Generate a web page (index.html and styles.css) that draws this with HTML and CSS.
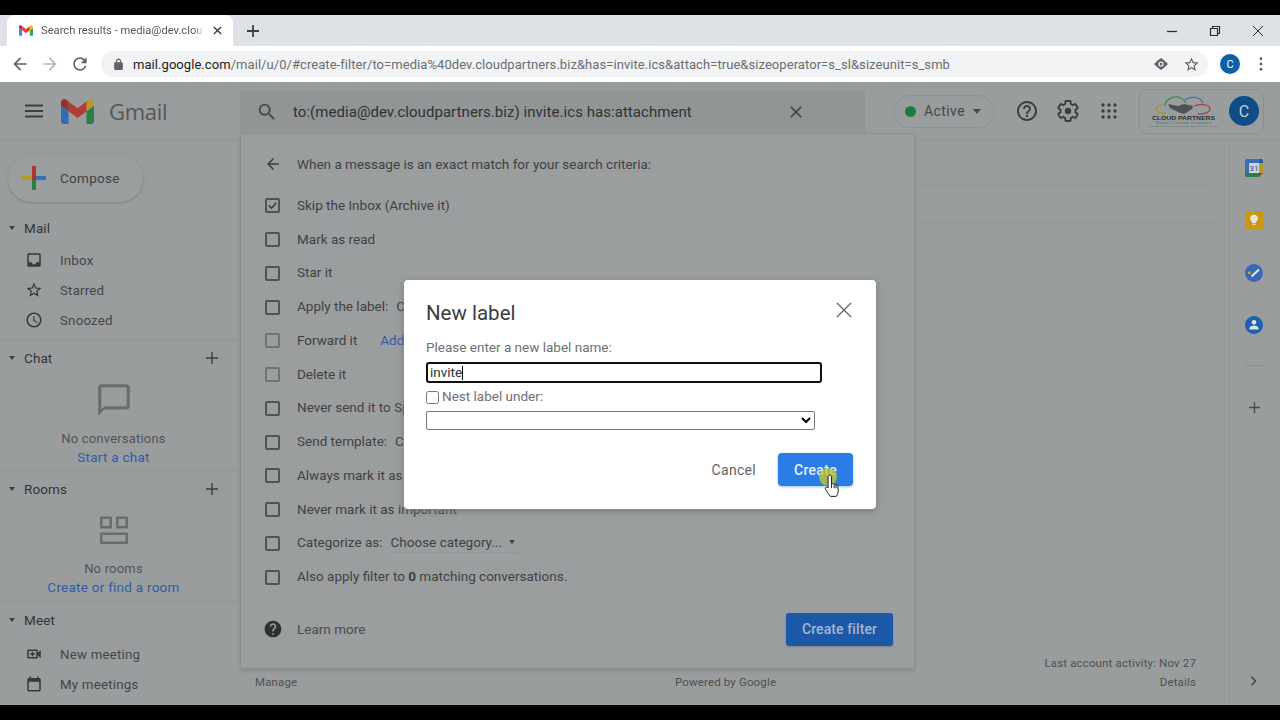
FILE: index.html
```html
<!DOCTYPE html>
<html>
<head>
    <title>Search results - media@dev.cloudpartners.biz</title>
    <link rel="stylesheet" href="styles.css">
</head>
<body>
<div class="blackbar"></div>

<div class="tabstrip">
    <div class="tab">
        <svg class="favicon" viewBox="52 42 88 66">
            <path fill="#4285f4" d="M58 108h14V74L52 59v43c0 3.32 2.69 6 6 6"/>
            <path fill="#34a853" d="M120 108h14c3.32 0 6-2.69 6-6V59l-20 15"/>
            <path fill="#fbbc04" d="M120 48v26l20-15v-8c0-7.42-8.47-11.65-14.4-7.2"/>
            <path fill="#ea4335" d="M72 74V48l24 18 24-18v26L96 92"/>
            <path fill="#c5221f" d="M52 51v8l20 15V48l-5.6-4.2c-5.94-4.45-14.4-.22-14.4 7.2"/>
        </svg>
        <span class="tab-title">Search results - media@dev.clou</span>
        <svg class="tab-close" viewBox="0 0 10 10"><path d="M1 1l8 8M9 1l-8 8"/></svg>
    </div>
    <svg class="tab-new" viewBox="0 0 12 12"><path d="M6 0v12M0 6h12"/></svg>
    <div class="winctl">
        <svg viewBox="0 0 12 12"><path d="M1 6.5h10" stroke-width="1.3"/></svg>
        <svg viewBox="0 0 12 12"><path d="M1.5 3.5h7v7h-7zM3.5 3.5v-2h7v7h-2" stroke-width="1.2"/></svg>
        <svg viewBox="0 0 12 12"><path d="M1 1l10 10M11 1L1 11" stroke-width="1"/></svg>
    </div>
</div>

<div class="toolbar">
    <svg class="nav-ic" viewBox="0 0 24 24"><path fill="#5f6368" d="M20 11H7.83l5.59-5.59L12 4l-8 8 8 8 1.41-1.41L7.83 13H20v-2z"/></svg>
    <svg class="nav-ic" viewBox="0 0 24 24"><path fill="#b4b7bb" d="M4 11h12.17l-5.59-5.59L12 4l8 8-8 8-1.41-1.41L16.17 13H4v-2z"/></svg>
    <svg class="nav-ic" viewBox="0 0 24 24"><path fill="#5f6368" d="M17.65 6.35A7.958 7.958 0 0 0 12 4c-4.42 0-7.99 3.58-7.99 8s3.57 8 7.99 8c3.73 0 6.84-2.55 7.73-6h-2.08A5.99 5.99 0 0 1 12 18c-3.31 0-6-2.69-6-6s2.69-6 6-6c1.66 0 3.14.69 4.22 1.78L13 11h7V4l-2.35 2.35z"/></svg>
    <div class="omnibox">
        <svg class="lock" viewBox="0 0 24 24"><path fill="#5f6368" d="M18 8h-1V6c0-2.76-2.24-5-5-5S7 3.24 7 6v2H6c-1.1 0-2 .9-2 2v10c0 1.1.9 2 2 2h12c1.1 0 2-.9 2-2V10c0-1.1-.9-2-2-2zM9 6c0-1.66 1.34-3 3-3s3 1.34 3 3v2H9V6z"/></svg>
        <span class="url"><b>mail.google.com</b>/mail/u/0/#create-filter/to=media%40dev.cloudpartners.biz&amp;has=invite.ics&amp;attach=true&amp;sizeoperator=s_sl&amp;sizeunit=s_smb</span>
        <svg class="omni-eye" viewBox="0 0 14 12"><path fill="#5f6368" d="M7 0l3 2.2L14 6l-4 3.8L7 12 4 9.8 0 6l4-3.8z"/><circle cx="7" cy="6" r="2.6" fill="#fff"/><circle cx="7" cy="6" r="1.5" fill="#5f6368"/></svg>
        <svg class="omni-star" viewBox="0 0 24 24"><path fill="#5f6368" d="M22 9.24l-7.19-.62L12 2 9.19 8.63 2 9.24l5.46 4.73L5.82 21 12 17.27 18.18 21l-1.63-7.03L22 9.24zM12 15.4l-3.76 2.27 1-4.28-3.32-2.88 4.38-.38L12 6.1l1.71 4.04 4.38.38-3.32 2.88 1 4.28L12 15.4z"/></svg>
    </div>
    <span class="chrome-avatar">C</span>
    <svg class="chrome-dots" viewBox="0 0 4 16"><circle cx="2" cy="2" r="1.6"/><circle cx="2" cy="8" r="1.6"/><circle cx="2" cy="14" r="1.6"/></svg>
</div>

<div class="gmail">
    <header class="gm-header">
        <div class="gm-brand">
            <svg class="burger" viewBox="0 0 18 14"><path d="M0 1.5h18M0 7h18M0 12.5h18"/></svg>
            <svg class="gm-logo" viewBox="52 42 88 66">
                <path fill="#2f6cb8" d="M58 108h14V74L52 59v43c0 3.32 2.69 6 6 6"/>
                <path fill="#2b7f45" d="M120 108h14c3.32 0 6-2.69 6-6V59l-20 15"/>
                <path fill="#b89a22" d="M120 48v26l20-15v-8c0-7.42-8.47-11.65-14.4-7.2"/>
                <path fill="#b03d32" d="M72 74V48l24 18 24-18v26L96 92"/>
                <path fill="#96302a" d="M52 51v8l20 15V48l-5.6-4.2c-5.94-4.45-14.4-.22-14.4 7.2"/>
            </svg>
            <span class="gm-word">Gmail</span>
        </div>
        <div class="search">
            <svg class="search-ic" viewBox="0 0 24 24"><path fill="#46484a" d="M15.5 14h-.79l-.28-.27A6.471 6.471 0 0 0 16 9.5 6.5 6.5 0 1 0 9.5 16c1.61 0 3.09-.59 4.23-1.57l.27.28v.79l5 4.99L20.49 19l-4.99-5zm-6 0C7.01 14 5 11.99 5 9.5S7.01 5 9.5 5 14 7.01 14 9.5 11.99 14 9.5 14z"/></svg>
            <span class="search-text">to:(media@dev.cloudpartners.biz) invite.ics has:attachment</span>
            <svg class="search-x" viewBox="0 0 12 12"><path d="M.7.7l10.6 10.6M11.3.7L.7 11.3"/></svg>
        </div>
        <div class="active-pill">
            <span class="dot"></span>
            <span>Active</span>
            <span class="caret caret-big"></span>
        </div>
        <svg class="hd-ic hd-help" viewBox="0 0 24 24"><path d="M11 18h2v-2h-2v2zm1-16C6.48 2 2 6.48 2 12s4.48 10 10 10 10-4.48 10-10S17.52 2 12 2zm0 18c-4.41 0-8-3.59-8-8s3.59-8 8-8 8 3.59 8 8-3.59 8-8 8zm0-14c-2.21 0-4 1.79-4 4h2c0-1.1.9-2 2-2s2 .9 2 2c0 2-3 1.75-3 5h2c0-2.25 3-2.5 3-5 0-2.21-1.79-4-4-4z"/></svg>
        <svg class="hd-ic hd-gear" viewBox="0 0 24 24"><path class="gear-line" d="M19.43 12.98c.04-.32.07-.64.07-.98s-.03-.66-.07-.98l2.11-1.65c.19-.15.24-.42.12-.64l-2-3.46c-.12-.22-.39-.3-.61-.22l-2.49 1c-.52-.4-1.08-.73-1.69-.98l-.38-2.65C14.46 2.18 14.25 2 14 2h-4c-.25 0-.46.18-.49.42l-.38 2.65c-.61.25-1.17.59-1.69.98l-2.49-1c-.23-.09-.49 0-.61.22l-2 3.46c-.13.22-.07.49.12.64l2.11 1.65c-.04.32-.07.65-.07.98s.03.66.07.98l-2.11 1.65c-.19.15-.24.42-.12.64l2 3.46c.12.22.39.3.61.22l2.49-1c.52.4 1.08.73 1.69.98l.38 2.65c.03.24.24.42.49.42h4c.25 0 .46-.18.49-.42l.38-2.65c.61-.25 1.17-.59 1.69-.98l2.49 1c.23.09.49 0 .61-.22l2-3.46c.12-.22.07-.49-.12-.64l-2.11-1.65z"/><circle cx="12" cy="12" r="3.2"/></svg>
        <svg class="hd-ic hd-grid" viewBox="0 0 16 16"><circle cx="2" cy="2" r="1.7"/><circle cx="8" cy="2" r="1.7"/><circle cx="14" cy="2" r="1.7"/><circle cx="2" cy="8" r="1.7"/><circle cx="8" cy="8" r="1.7"/><circle cx="14" cy="8" r="1.7"/><circle cx="2" cy="14" r="1.7"/><circle cx="8" cy="14" r="1.7"/><circle cx="14" cy="14" r="1.7"/></svg>
        <div class="account">
            <svg class="cp-logo" viewBox="0 0 72 34">
                <path fill="none" stroke="#a8932a" stroke-width="1.3" d="M18 11C10 10 7 14 9 17c1 2 4 2 9 2"/>
                <path fill="none" stroke="#3f8a55" stroke-width="1.3" d="M17 11c1-6 9-10 16-7 2 1 4 3 5 5"/>
                <path fill="none" stroke="#4a6fb0" stroke-width="1.3" d="M37 6c5-4 15-4 18 3"/>
                <path fill="none" stroke="#a8404a" stroke-width="1.3" d="M46 12c8-3 16-1 16 3 0 4-6 5-12 5"/>
                <path fill="#4f5153" d="M20 10l10 2 6-2 9 2-1 3-8 5-6-2-8-4z"/>
                <text class="cp-name" x="4" y="25.500" textLength="63" lengthAdjust="spacingAndGlyphs">CLOUD PARTNERS</text>
                <text class="cp-tag" x="7" y="30" textLength="57" lengthAdjust="spacingAndGlyphs">Your Cloud Partner</text>
                <path fill="none" stroke="#7a8a8a" stroke-width=".8" d="M0 32.500h70"/>
            </svg>
            <span class="gm-avatar">C</span>
        </div>
    </header>

    <div class="gm-main">
        <nav class="sidebar">
            <div class="compose">
                <svg class="compose-plus" viewBox="0 0 24 24">
                    <path fill="#2b7f45" d="M10 14h4v10h-4z"/>
                    <path fill="#3b6fb5" d="M14 10h10v4H14z"/>
                    <path fill="#b89a22" d="M0 10h10v4H0z"/>
                    <path fill="#a8382e" d="M10 0h4v14h-4z"/>
                </svg>
                <span>Compose</span>
            </div>

            <section class="sec sec-mail">
                <div class="sec-head"><span class="caret"></span><span class="sec-title">Mail</span></div>
                <div class="sec-items">
                    <div class="item"><svg viewBox="0 0 24 24"><path d="M19 3H5c-1.1 0-2 .9-2 2v14c0 1.1.9 2 2 2h14c1.1 0 2-.9 2-2V5c0-1.1-.9-2-2-2zm0 12h-4c0 1.66-1.35 3-3 3s-3-1.34-3-3H5V5h14v10z"/></svg><span>Inbox</span></div>
                    <div class="item"><svg viewBox="0 0 24 24"><path d="M22 9.24l-7.19-.62L12 2 9.19 8.63 2 9.24l5.46 4.73L5.82 21 12 17.27 18.18 21l-1.63-7.03L22 9.24zM12 15.4l-3.76 2.27 1-4.28-3.32-2.88 4.38-.38L12 6.1l1.71 4.04 4.38.38-3.32 2.88 1 4.28L12 15.4z"/></svg><span>Starred</span></div>
                    <div class="item"><svg viewBox="0 0 24 24"><path d="M11.99 2C6.47 2 2 6.48 2 12s4.47 10 9.99 10C17.52 22 22 17.52 22 12S17.52 2 11.99 2zM12 20c-4.42 0-8-3.58-8-8s3.58-8 8-8 8 3.58 8 8-3.58 8-8 8zm.5-13H11v6l5.25 3.15.75-1.23-4.5-2.67z"/></svg><span>Snoozed</span></div>
                </div>
            </section>

            <section class="sec">
                <div class="sec-head"><span class="caret"></span><span class="sec-title">Chat</span><svg class="sec-plus" viewBox="0 0 14 14"><path d="M7 1v12M1 7h12"/></svg></div>
                <div class="empty empty-chat">
                    <svg class="empty-ic" viewBox="0 0 24 24"><path d="M20 2H4c-1.1 0-2 .9-2 2v18l4-4h14c1.1 0 2-.9 2-2V4c0-1.1-.9-2-2-2zm0 14H6l-2 2V4h16v12z"/></svg>
                    <div>No conversations</div>
                    <a class="link">Start a chat</a>
                </div>
            </section>

            <section class="sec">
                <div class="sec-head"><span class="caret"></span><span class="sec-title">Rooms</span><svg class="sec-plus" viewBox="0 0 14 14"><path d="M7 1v12M1 7h12"/></svg></div>
                <div class="empty">
                    <svg class="empty-ic" viewBox="0 1 38 38"><path d="M5 5.5h12v12H5zm2.500 2.500v7h7v-7zM21 5.500h12v12H21zm2.500 2.500v7h7v-7zM5 21.500h28v11.500H5zm2.500 2.500v6.500h23V24z" fill-rule="evenodd"/></svg>
                    <div>No rooms</div>
                    <a class="link">Create or find a room</a>
                </div>
            </section>

            <section class="sec sec-last">
                <div class="sec-head"><span class="caret"></span><span class="sec-title">Meet</span></div>
                <div class="sec-items sec-items-meet">
                    <div class="item"><svg viewBox="0 0 24 24"><path d="M15 8v8H5V8h10m1-2H4c-.55 0-1 .45-1 1v10c0 .55.45 1 1 1h12c.55 0 1-.45 1-1v-3.500l4 4v-11l-4 4V7c0-.55-.45-1-1-1zm-5 3H9v2H7v2h2v2h2v-2h2v-2h-2V9z"/></svg><span>New meeting</span></div>
                    <div class="item"><svg viewBox="0 0 24 24"><path d="M19 4h-1V2h-2v2H8V2H6v2H5c-1.1 0-2 .9-2 2v14c0 1.1.9 2 2 2h14c1.1 0 2-.9 2-2V6c0-1.100-.9-2-2-2zm0 16H5V9h14v11z"/></svg><span>My meetings</span></div>
                </div>
            </section>
        </nav>

        <main class="content">
            <div class="list-row list-row-a"></div>
            <div class="list-row list-row-b"></div>
            <footer class="gm-footer">
                <span>Manage</span>
                <span>Powered by Google</span>
                <div class="activity">
                    <div>Last account activity: Nov 27</div>
                    <div>Details</div>
                </div>
            </footer>
        </main>

        <aside class="rail">
            <svg class="rail-ic" viewBox="0 0 18 18">
                <path fill="#3b6fb5" d="M0 1.500A1.500 1.500 0 0 1 1.500 0H14v4H4v10H0z"/>
                <path fill="#c9d3e4" d="M4 4h10v10H4z"/>
                <path fill="#b89a22" d="M14 4h4v10h-4z"/>
                <path fill="#2b7f45" d="M0 14h14v4H1.500A1.500 1.500 0 0 1 0 16.500z"/>
                <path fill="#a8382e" d="M14 14h4l-4 4z"/>
                <path fill="#285a9c" d="M14 0h2.500A1.500 1.500 0 0 1 18 1.500V4h-4z"/>
                <text class="cal-num" x="9" y="12">31</text>
            </svg>
            <svg class="rail-ic" viewBox="0 0 18 18">
                <rect width="18" height="18" rx="1.500" fill="#c9980f"/>
                <circle cx="9" cy="7.500" r="3.800" fill="#e4e4e2"/>
                <path fill="#e4e4e2" d="M7 10h4v2H7zM7 12.800h4v1H7z"/>
            </svg>
            <svg class="rail-ic" viewBox="0 0 18 18">
                <circle cx="9" cy="9" r="9" fill="#3a66b8"/>
                <path fill="none" stroke="#e8e8e8" stroke-width="2" d="M6.500 12.500L14 5.500"/>
                <circle cx="4.300" cy="8.800" r="1.500" fill="#c9a52a"/>
            </svg>
            <svg class="rail-ic" viewBox="0 0 18 18">
                <circle cx="9" cy="9" r="9" fill="#1f5fb0"/>
                <circle cx="9" cy="6.300" r="2.300" fill="#e0e2e4"/>
                <path fill="#e0e2e4" d="M4.500 12.200c0-1.800 3-2.700 4.500-2.700s4.500.9 4.500 2.700v1.300h-9z"/>
            </svg>
            <div class="rail-sep"></div>
            <svg class="rail-plus" viewBox="0 0 12 12"><path d="M6 0v12M0 6h12"/></svg>
            <svg class="rail-chev" viewBox="0 0 8 12"><path d="M1.500 1l5 5-5 5"/></svg>
        </aside>
    </div>

    <div class="filter-panel">
        <div class="filter-head">
            <span class="f-ic"><svg class="back-ic" viewBox="0 0 24 24"><path d="M20 11H7.830l5.590-5.590L12 4l-8 8 8 8 1.410-1.410L7.830 13H20v-2z"/></svg></span>
            <span>When a message is an exact match for your search criteria:</span>
        </div>
        <div class="f-row"><span class="box checked"><svg viewBox="0 0 12 12"><path d="M2 6l3 3 5-6"/></svg></span><span>Skip the Inbox (Archive it)</span></div>
        <div class="f-row"><span class="box"></span><span>Mark as read</span></div>
        <div class="f-row"><span class="box"></span><span>Star it</span></div>
        <div class="f-row"><span class="box"></span><span>Apply the label:</span><span class="f-gap">Choose label...</span></div>
        <div class="f-row"><span class="box off"></span><span>Forward it</span><a class="link f-add">Add forwarding address</a></div>
        <div class="f-row"><span class="box off"></span><span>Delete it</span></div>
        <div class="f-row"><span class="box"></span><span>Never send it to Spam</span></div>
        <div class="f-row"><span class="box"></span><span>Send template:</span><span class="f-gap">Choose template...</span></div>
        <div class="f-row"><span class="box"></span><span>Always mark it as important</span></div>
        <div class="f-row"><span class="box"></span><span>Never mark it as important</span></div>
        <div class="f-row"><span class="box"></span><span>Categorize as:</span><span class="f-choose">Choose category...<span class="caret caret-choose"></span></span></div>
        <div class="f-row"><span class="box"></span><span>Also apply filter to <b>0</b> matching conversations.</span></div>
        <div class="filter-foot">
            <span class="f-ic"><svg class="learn-ic" viewBox="0 0 24 24"><path d="M12 2C6.480 2 2 6.480 2 12s4.480 10 10 10 10-4.480 10-10S17.520 2 12 2zm1 17h-2v-2h2v2zm2.070-7.750l-.9.920C13.450 12.900 13 13.500 13 15h-2v-.5c0-1.100.45-2.100 1.170-2.830l1.240-1.260c.37-.36.590-.86.590-1.410 0-1.100-.9-2-2-2s-2 .9-2 2H8c0-2.210 1.790-4 4-4s4 1.790 4 4c0 .88-.36 1.680-.93 2.250z"/></svg></span>
            <span>Learn more</span>
            <button class="create-filter">Create filter</button>
        </div>
    </div>

    <div class="dialog">
        <div class="dlg-top">
            <span class="dlg-title">New label</span>
            <svg class="dlg-close" viewBox="0 0 16 16"><path d="M1 1l14 14M15 1L1 15"/></svg>
        </div>
        <div class="dlg-label">Please enter a new label name:</div>
        <div class="dlg-input">invite<span class="text-caret"></span></div>
        <label class="dlg-nest"><input type="checkbox" class="dlg-check"><span>Nest label under:</span></label>
        <select class="dlg-select"><option></option></select>
        <div class="dlg-actions">
            <span class="dlg-cancel">Cancel</span>
            <div class="dlg-create">
                <span>Create</span>
                <span class="click-dot"></span>
                <svg class="hand" viewBox="0 0 14 22">
                    <path d="M5 1c.9 0 1.500.7 1.500 1.600V9l.9-.2c.8-.1 1.400.2 1.600.8.8-.3 1.500 0 1.700.7.800-.2 1.500.2 1.600 1l.4 3.400c.2 2.200-.5 4.100-1.800 5.800H5.500C4.300 19 2.800 16.600 1.200 14.300c-.6-.9-.4-1.700.3-2.100.7-.3 1.300 0 1.900.7V2.600C3.400 1.700 4.100 1 5 1z"/>
                    <path d="M6.500 9v4M9 9.600V13M10.700 10.300V13"/>
                </svg>
            </div>
        </div>
    </div>
</div>

<div class="blackbar"></div>
</body>
</html>
```

FILE: styles.css
```css
* { box-sizing: border-box; }
html, body { height: 100%; }
body { margin: 0; display: flex; flex-direction: column; height: 720px; overflow: hidden; font-family: Roboto, "Liberation Sans", sans-serif; background: #000; color: #3c3e40; }
svg { display: block; flex-shrink: 0; }

.blackbar { height: 15px; background: #000; flex-shrink: 0; }

/* chrome */
.tabstrip { height: 31px; background: #dee1e6; display: flex; align-items: flex-end; padding-left: 7px; flex-shrink: 0; }
.tab { width: 226px; height: 31px; background: #fff; border-radius: 8px 8px 0 0; display: flex; align-items: center; padding-left: 12px; }
.favicon { width: 14px; height: 11px; }
.tab-title { width: 164px; margin-left: 8px; font-size: 11.2px; color: #55585c; white-space: nowrap; -webkit-mask-image: linear-gradient(90deg, #000 93%, transparent); mask-image: linear-gradient(90deg, #000 93%, transparent); }
.tab-close { width: 9px; height: 9px; margin-left: 8px; }
.tab-close path { stroke: #3c4043; stroke-width: 1.6; fill: none; }
.tab-new { width: 12px; height: 12px; margin: 0 0 9px 14px; }
.tab-new path { stroke: #3c4043; stroke-width: 1.8; fill: none; }
.winctl { margin-left: auto; align-self: center; display: flex; gap: 31px; padding-right: 16px; }
.winctl svg { width: 12px; height: 12px; }
.winctl path { stroke: #2c2e30; fill: none; }

.toolbar { height: 36px; background: #fff; display: flex; align-items: center; padding-left: 10px; flex-shrink: 0; }
.nav-ic { width: 20px; height: 20px; margin-right: 10px; }
.omnibox { width: 1107px; height: 26px; margin-left: 1px; background: #f1f3f4; border-radius: 13px; display: flex; align-items: center; padding-left: 11px; }
.lock { width: 13px; height: 13px; }
.url { margin-left: 8px; font-size: 13px; color: #6a6d71; white-space: nowrap; letter-spacing: .06px; }
.url b { font-weight: 400; color: #202124; }
.omni-eye { width: 14px; height: 12px; margin-left: auto; }
.omni-star { width: 17px; height: 17px; margin: 0 8px 0 15px; }
.chrome-avatar { width: 20px; height: 20px; margin-left: 12px; border-radius: 50%; background: #0d5fa8; color: #fff; font-size: 11px; display: flex; align-items: center; justify-content: center; }
.chrome-dots { width: 4px; height: 14px; margin-left: 19px; fill: #5f6368; }

/* gmail */
.gmail { position: relative; flex: 1; background: #9a9d9e; display: flex; flex-direction: column; min-height: 0; }
.gm-header { height: 59px; display: flex; align-items: center; flex-shrink: 0; border-bottom: 1px solid #939697; }
.gm-brand { width: 240px; display: flex; align-items: center; padding-left: 25px; }
.burger { width: 18px; height: 14px; }
.burger path { stroke: #3c3e40; stroke-width: 1.8; fill: none; }
.gm-logo { width: 33px; height: 25px; margin-left: 18px; }
.gm-word { margin-left: 15px; font-size: 22px; color: #54565a; font-family: "Open Sans", Roboto, sans-serif; letter-spacing: -.3px; }
.search { width: 625px; height: 42px; margin-top: 1px; background: #929596; border-radius: 2px 2px 0 0; display: flex; align-items: center; padding-left: 16px; }
.search-ic { width: 22px; height: 22px; }
.search-text { margin-left: 15px; font-size: 15px; letter-spacing: .05px; color: #303234; white-space: nowrap; width: 497px; }
.search-x { width: 12px; height: 12px; }
.search-x path { stroke: #3c3e40; stroke-width: 1.6; fill: none; }

.active-pill { width: 102px; height: 33px; margin-left: 28px; border: 1px solid #8d9091; border-radius: 17px; display: flex; align-items: center; padding-left: 11px; font-size: 14px; letter-spacing: .4px; color: #454749; }
.dot { width: 11px; height: 11px; border-radius: 50%; background: #1f7a3d; margin-right: 8px; }
.caret { width: 0; height: 0; border-left: 3.5px solid transparent; border-right: 3.5px solid transparent; border-top: 4px solid #3c3e40; }
.caret-big { margin-left: 8px; border-left-width: 4px; border-right-width: 4px; border-top-width: 5px; border-top-color: #454749; }

.hd-ic { fill: #3c3e40; }
.hd-help { width: 24px; height: 24px; margin-left: 20px; }
.hd-gear { width: 24px; height: 24px; margin-left: 17px; }
.gear-line { fill: none; stroke: #3c3e40; stroke-width: 1.9; }
.hd-grid { width: 16px; height: 16px; margin-left: 21px; }

.account { width: 125px; height: 45px; margin-left: 22px; border: 1px solid #8d9091; border-radius: 8px; display: flex; align-items: center; padding-left: 8px; }
.cp-logo { width: 72px; height: 34px; }
.cp-name { font-size: 5px; font-weight: 700; fill: #2e3032; font-family: "Liberation Sans", sans-serif; }
.cp-tag { font-size: 4px; fill: #6b6d60; font-family: "Liberation Serif", serif; }
.gm-avatar { width: 30px; height: 30px; margin-left: 9px; border-radius: 50%; background: #0f4d86; color: #c8ccd2; font-size: 16px; display: flex; align-items: center; justify-content: center; }

.gm-main { flex: 1; display: flex; min-height: 0; }

/* sidebar */
.sidebar { width: 240px; flex-shrink: 0; display: flex; flex-direction: column; }
.compose { width: 135px; height: 47px; margin: 14px 0 11px 8px; padding: 0 0 1px 14px; border-radius: 24px; background: #9b9e9f; box-shadow: 0 1px 3px #7e8182; display: flex; align-items: center; font-size: 13.5px; letter-spacing: .3px; color: #3f4143; }
.compose-plus { width: 24px; height: 24px; margin-right: 14px; }
.sec { padding: 3px 0 4px; border-bottom: 1px solid #939697; }
.sec-mail { padding-top: 0; }
.sec-last { border-bottom: 0; }
.sec-head { height: 30px; display: flex; align-items: center; padding-left: 9px; font-size: 13.5px; color: #333537; }
.sec-title { margin-left: 9px; letter-spacing: .1px; }
.sec-plus { width: 14px; height: 14px; margin-left: auto; margin-right: 21px; }
.sec-plus path { stroke: #3c3e40; stroke-width: 1.4; fill: none; }
.sec-items { margin-top: 2px; }
.sec-items-meet { margin-top: 4px; }
.item { height: 30px; display: flex; align-items: center; padding-left: 25px; font-size: 13.3px; letter-spacing: .2px; color: #434547; }
.item svg { width: 18px; height: 18px; margin-right: 17px; fill: #36383a; }
.empty { margin-top: 8px; text-align: center; font-size: 13px; line-height: 19px; letter-spacing: .2px; color: #515355; width: 227px; }
.empty-chat { margin-bottom: -1px; }
.empty-chat .empty-ic { margin-bottom: 10px; }
.empty-ic { width: 38px; height: 38px; margin: 0 auto 9px; fill: #6a6d6e; }
.link { color: #2f5ca6; font-size: 13.5px; letter-spacing: .25px; }

/* content behind the filter box */
.content { flex: 1; display: flex; flex-direction: column; min-width: 0; }
.list-row { border-bottom: 1px solid #939697; }
.list-row-a { height: 45px; margin-right: 19px; }
.list-row-b { height: 37px; margin-right: 14px; }
.gm-footer { margin-top: auto; padding: 0 33px 13px 15px; display: grid; grid-template-columns: 1fr auto 1fr; align-items: end; font-size: 11.5px; line-height: 19px; letter-spacing: .15px; color: #4e5052; }
.activity { text-align: right; }

/* right rail */
.rail { width: 51px; flex-shrink: 0; border-left: 1px solid #939697; display: flex; flex-direction: column; align-items: center; padding: 18px 2px 0 0; }
.rail-ic { width: 18px; height: 18px; margin-bottom: 34.300px; }
.cal-num { font-size: 8px; fill: #3f4c66; text-anchor: middle; font-family: Roboto, sans-serif; }
.rail-sep { width: 19px; height: 1px; background: #8b8e8f; margin-top: -3px; }
.rail-plus { width: 11px; height: 11px; margin-top: 36px; }
.rail-plus path { stroke: #4a4c4e; stroke-width: 1.5; fill: none; }
.rail-chev { width: 7px; height: 10px; margin: auto 2px 19px 0; }
.rail-chev path { stroke: #3c3e40; stroke-width: 1.6; fill: none; }

/* create filter box, sits over the search results */
.filter-panel { position: absolute; left: 240px; top: 51px; width: 675px; height: 536px; background: #9b9e9f; border: 1px solid #8d9091; box-shadow: 0 2px 4px #86898a; padding: 13px 0 0 24px; font-size: 13.5px; color: #3f4143; }
.filter-head { height: 34px; margin-bottom: 7px; display: flex; align-items: center; }
.f-ic { width: 15px; margin-right: 17px; display: flex; justify-content: center; }
.back-ic { width: 18px; height: 18px; fill: #3c3e40; }
.f-row { height: 33.750px; display: flex; align-items: center; white-space: nowrap; }
.box { width: 15px; height: 15px; margin: 2px 17px 0 0; border: 2px solid #505254; border-radius: 2px; display: flex; align-items: center; justify-content: center; }
.box svg { width: 11px; height: 11px; }
.box path { stroke: #2f3133; stroke-width: 1.500; fill: none; }
.box.off { border-color: #707274; }
.f-gap { margin-left: 8px; }
.f-add { margin-left: 23px; font-size: 13.5px; letter-spacing: 0; }
.f-choose { margin-left: 8px; padding-bottom: 2px; margin-top: 2px; border-bottom: 1px solid #949798; display: flex; align-items: center; }
.caret-choose { margin: 0 4px 0 7px; }
.filter-foot { margin-top: 19px; height: 34px; display: flex; align-items: center; padding-right: 21px; color: #4a4c4e; }
.learn-ic { width: 20px; height: 20px; fill: #2e3032; }
.create-filter { margin-left: auto; width: 107px; height: 33px; border: 0; border-radius: 3px; background: #1c58a8; color: #a6b6cd; font: 500 14px Roboto, sans-serif; letter-spacing: .1px; box-shadow: 0 1px 2px #7e8182; }

/* new label dialog */
.dialog { position: absolute; left: 404px; top: 198px; width: 472px; height: 229px; background: #fff; border-radius: 4px; padding: 18px 23px 0 22px; box-shadow: 0 2px 6px #77797a; color: #6d7074; }
.dlg-top { height: 28px; display: flex; align-items: flex-start; justify-content: space-between; }
.dlg-title { font-size: 20.5px; line-height: 30px; color: #3a3c3f; }
.dlg-close { width: 16px; height: 16px; margin-top: 4px; margin-right: 1px; }
.dlg-close path { stroke: #5f6368; stroke-width: 1.3; fill: none; }
.dlg-label { margin-top: 12px; font-size: 13.5px; line-height: 18px; }
.dlg-input { width: 396px; height: 21px; margin-top: 6px; border: 2px solid #101010; border-radius: 3px; padding-left: 2px; font-size: 13.5px; line-height: 17px; color: #303134; display: flex; align-items: center; }
.text-caret { width: 1px; height: 14px; background: #000; }
.dlg-nest { height: 19px; margin-top: 3px; display: flex; align-items: center; font-size: 13.5px; }
.dlg-check { width: 13px; height: 13px; margin: 3px 3px 0 0; }
.dlg-select { display: block; width: 389px; height: 19px; margin-top: 6px; font-size: 13px; background: #fff; border: 1px solid #767676; border-radius: 2px; }
.dlg-actions { margin-top: 23px; display: flex; align-items: center; justify-content: flex-end; font-size: 14px; letter-spacing: .3px; color: #5f6368; }
.dlg-cancel { margin-right: 22px; }
.dlg-create { position: relative; width: 75px; height: 33px; border-radius: 4px; background: #2a7de4; color: #e6f0fc; font-weight: 500; display: flex; align-items: center; justify-content: center; box-shadow: 0 1px 3px #9cc0ee; }
.click-dot { position: absolute; left: 41px; top: 15px; width: 18px; height: 18px; border-radius: 50%; background: rgba(190, 200, 50, .78); }
.hand { position: absolute; left: 46px; top: 21px; width: 16px; height: 24px; }
.hand path { fill: #fff; stroke: #1a1a1a; stroke-width: .9; }
```
